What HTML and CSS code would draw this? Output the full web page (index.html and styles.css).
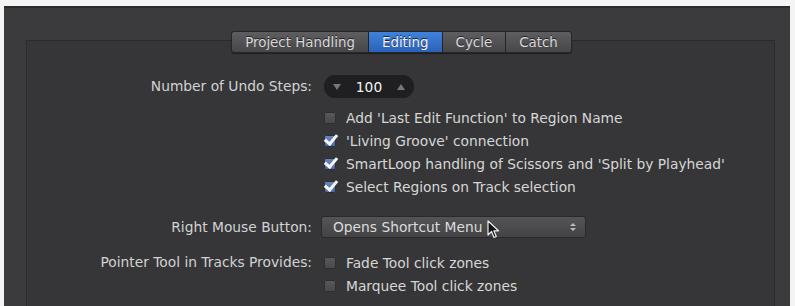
FILE: index.html
```html
<!DOCTYPE html>
<html lang="en">
<head>
    <meta charset="UTF-8">
    <title>Editing Preferences</title>
    <link rel="stylesheet" href="styles.css">
</head>
<body>
    <div class="window">
        <div class="tabs">
            <span class="tab">Project Handling</span>
            <span class="tab active">Editing</span>
            <span class="tab">Cycle</span>
            <span class="tab">Catch</span>
        </div>

        <div class="pane">
            <!-- Undo steps -->
            <div class="row">
                <div class="label">Number of Undo Steps:</div>
                <div class="stepper">
                    <span class="tri down"></span>
                    <span class="value">100</span>
                    <span class="tri up"></span>
                </div>
            </div>

            <div class="row">
                <div class="label"></div>
                <div class="checks">
                    <div class="check"><span class="box"></span>Add 'Last Edit Function' to Region Name</div>
                    <div class="check"><span class="box on"></span>'Living Groove' connection</div>
                    <div class="check"><span class="box on"></span>SmartLoop handling of Scissors and 'Split by Playhead'</div>
                    <div class="check"><span class="box on"></span>Select Regions on Track selection</div>
                </div>
            </div>

            <!-- Right mouse -->
            <div class="row popup-row">
                <div class="label">Right Mouse Button:</div>
                <div class="popup">
                    <span>Opens Shortcut Menu</span>
                    <span class="arrows"><i class="a-up"></i><i class="a-down"></i></span>
                    <svg class="cursor" width="14" height="20" viewBox="0 0 14 20">
                        <path d="M1 1 L1 15 L4.5 11.5 L7 17.5 L9.3 16.5 L6.8 10.8 L11.5 10.8 Z" fill="#111" stroke="#eee" stroke-width="1.2" stroke-linejoin="round"/>
                    </svg>
                </div>
            </div>

            <div class="row tools-row">
                <div class="label">Pointer Tool in Tracks Provides:</div>
                <div class="checks">
                    <div class="check"><span class="box"></span>Fade Tool click zones</div>
                    <div class="check"><span class="box"></span>Marquee Tool click zones</div>
                </div>
            </div>
        </div>
    </div>
</body>
</html>
```

FILE: styles.css
```css
/* General Reset */
* {
    margin: 0;
    padding: 0;
    box-sizing: border-box;
}

html, body {
    height: 100%;
    overflow: hidden;
}

body {
    background: #f4f4f4;
    padding: 6px 5px 0 4px;
    font-family: "DejaVu Sans", sans-serif;
    font-size: 13.8px;
    color: #d6d6d6;
}

/* Window */
.window {
    height: 300px;
    overflow: hidden;
    background: #3b3b3d;
    border-top: 2px solid #2c2c2e;
    padding-top: 23px;
}

/* Tabs */
.tabs {
    position: relative;
    z-index: 1;
    display: flex;
    justify-content: center;
    margin-left: 9px;
    font-size: 13.4px;
}

.tab {
    height: 22px;
    line-height: 21px;
    padding: 0 13px;
    background: linear-gradient(#5e5e60, #474749);
    border: 1px solid #262628;
    border-left: none;
    color: #dadada;
    text-shadow: 0 -1px 0 #222;
    box-shadow: 0 1px 1px rgba(0, 0, 0, 0.4);
}

.tab:first-child {
    border-left: 1px solid #262628;
    border-radius: 3px 0 0 3px;
}

.tab:last-child {
    border-radius: 0 3px 3px 0;
}

.tab.active {
    background: linear-gradient(#3f82dc, #2a62b8);
    color: #eef3ff;
}

/* Pane */
.pane {
    margin: -13px 15px 0 22px;
    height: 280px;
    background: #363638;
    border: 1px solid #2b2b2d;
    padding-top: 34px;
}

.row {
    display: flex;
    align-items: flex-start;
}

.label {
    width: 286px;
    flex-shrink: 0;
    text-align: right;
    padding-right: 1px;
    line-height: 23px;
    color: #d2d2d2;
    white-space: nowrap;
}

/* Stepper */
.stepper {
    display: flex;
    align-items: center;
    justify-content: space-between;
    width: 90px;
    height: 23px;
    margin-left: 11px;
    padding: 0 9px;
    background: #1f1f21;
    border-radius: 11px;
}

.value {
    color: #f2f2f2;
}

.tri {
    width: 0;
    height: 0;
    border-left: 4px solid transparent;
    border-right: 4px solid transparent;
}

.tri.down {
    border-top: 6px solid #77777a;
}

.tri.up {
    border-bottom: 6px solid #77777a;
}

/* Checkboxes */
.checks {
    display: flex;
    flex-direction: column;
    margin-left: 11px;
    margin-top: 8px;
}

.check {
    display: flex;
    align-items: center;
    height: 23px;
    color: #d6d6d6;
    white-space: nowrap;
}

.box {
    position: relative;
    width: 12px;
    height: 12px;
    margin-right: 10px;
    border-radius: 2px;
    background: linear-gradient(#5a5a5c, #474749);
    box-shadow: inset 0 0 0 1px #2e2e30;
}

.box.on {
    background: linear-gradient(#6d86b8, #4a68a6);
}

.box.on::after {
    content: "";
    position: absolute;
    left: 3px;
    top: -3px;
    width: 5px;
    height: 10px;
    border-right: 3px solid #f4f6fb;
    border-bottom: 3px solid #f4f6fb;
    transform: rotate(40deg);
}

/* Popup */
.popup-row {
    margin-top: 18px;
}

.popup {
    position: relative;
    display: flex;
    align-items: center;
    justify-content: space-between;
    width: 265px;
    height: 22px;
    margin-left: 8px;
    padding: 0 9px 0 11px;
    background: linear-gradient(#545456, #434345);
    border: 1px solid #29292b;
    border-radius: 3px;
    color: #dcdcdc;
}

.arrows {
    display: flex;
    flex-direction: column;
    gap: 2px;
}

.arrows i {
    width: 0;
    height: 0;
    border-left: 3px solid transparent;
    border-right: 3px solid transparent;
}

.a-up {
    border-bottom: 3px solid #bbb;
}

.a-down {
    border-top: 3px solid #bbb;
}

.cursor {
    position: absolute;
    left: 165px;
    top: 3px;
}

.tools-row {
    margin-top: 12px;
}

.tools-row .checks {
    margin-top: 0;
}
```
